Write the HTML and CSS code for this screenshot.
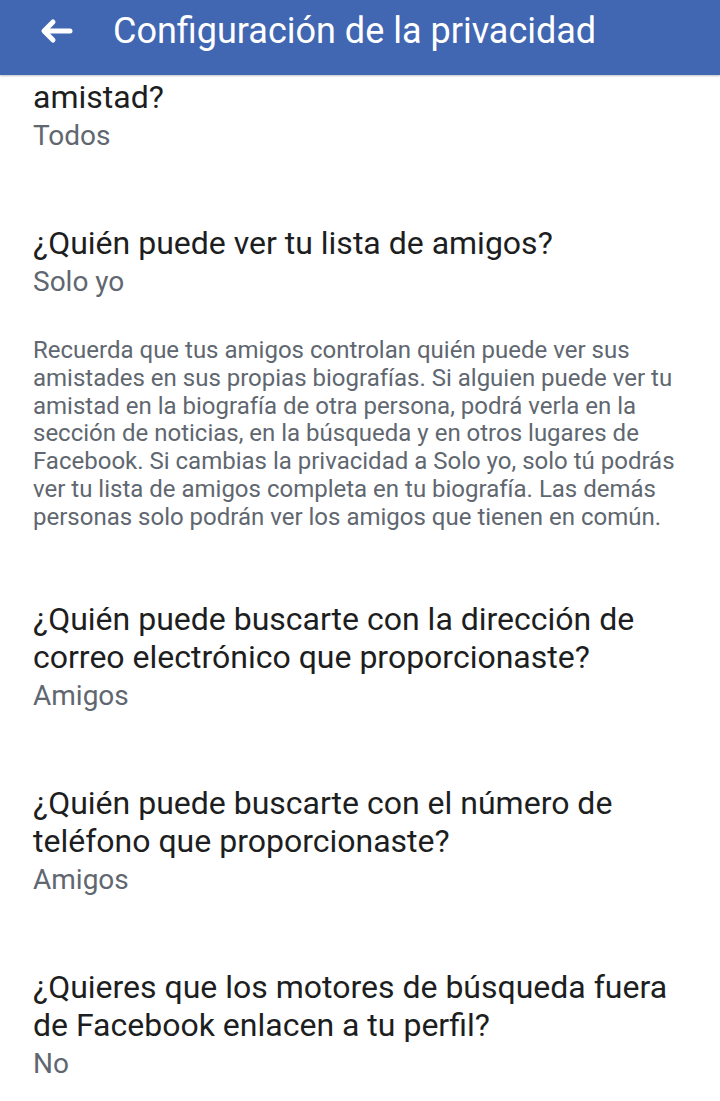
FILE: index.html
```html
<!DOCTYPE html>
<html lang="es">
<head>
    <meta charset="UTF-8">
    <meta name="viewport" content="width=device-width, initial-scale=1.0">
    <title>Configuración de la privacidad</title>
    <link rel="stylesheet" href="styles.css">
</head>
<body>
    <header class="topbar">
        <svg class="back" width="34" height="28" viewBox="0 0 34 28">
            <path d="M31 14H6M14 5L5 14l9 9" fill="none" stroke="#ffffff" stroke-width="5" stroke-linecap="round" stroke-linejoin="round"/>
        </svg>
        <h1>Configuración de la privacidad</h1>
    </header>
    <main>
        <section class="setting first">
            <p class="question">amistad?</p>
            <p class="answer">Todos</p>
        </section>
        <section class="setting">
            <p class="question">¿Quién puede ver tu lista de amigos?</p>
            <p class="answer">Solo yo</p>
            <p class="note">Recuerda que tus amigos controlan quién puede ver sus amistades en sus propias biografías. Si alguien puede ver tu amistad en la biografía de otra persona, podrá verla en la sección de noticias, en la búsqueda y en otros lugares de Facebook. Si cambias la privacidad a Solo yo, solo tú podrás ver tu lista de amigos completa en tu biografía. Las demás personas solo podrán ver los amigos que tienen en común.</p>
        </section>
        <section class="setting">
            <p class="question">¿Quién puede buscarte con la dirección de correo electrónico que proporcionaste?</p>
            <p class="answer">Amigos</p>
        </section>
        <section class="setting">
            <p class="question">¿Quién puede buscarte con el número de teléfono que proporcionaste?</p>
            <p class="answer">Amigos</p>
        </section>
        <section class="setting">
            <p class="question">¿Quieres que los motores de búsqueda fuera de Facebook enlacen a tu perfil?</p>
            <p class="answer">No</p>
        </section>
    </main>
</body>
</html>
```

FILE: styles.css
```css
body {
    margin: 0;
    background-color: #ffffff;
    font-family: Roboto, "Noto Sans", Arial, sans-serif;
    color: #1c1e21;
}

/* Barra superior */
.topbar {
    display: flex;
    align-items: center;
    height: 75px;
    padding-left: 39px;
    background-color: #4267b2;
    box-shadow: 0 1px 2px rgba(0, 0, 0, 0.25);
    color: #ffffff;
}

.topbar .back {
    flex: none;
    margin-right: 40px;
    margin-top: -14px;
}

.topbar h1 {
    margin: 0 0 14px 0;
    font-size: 36px;
    font-weight: 400;
    white-space: nowrap;
}

/* Lista de ajustes */
main {
    padding: 0 28px 0 33px;
}

.setting {
    padding-top: 68px;
}

.setting.first {
    padding-top: 3px;
}

.setting p {
    margin: 0;
}

.question {
    max-width: 640px;
    font-size: 32px;
    line-height: 38px;
    color: #1c1e21;
}

.answer {
    font-size: 28px;
    line-height: 40px;
    color: #606770;
}

.note {
    margin-top: 35px !important;
    font-size: 24px;
    line-height: 27.8px;
    color: #606770;
}
```
